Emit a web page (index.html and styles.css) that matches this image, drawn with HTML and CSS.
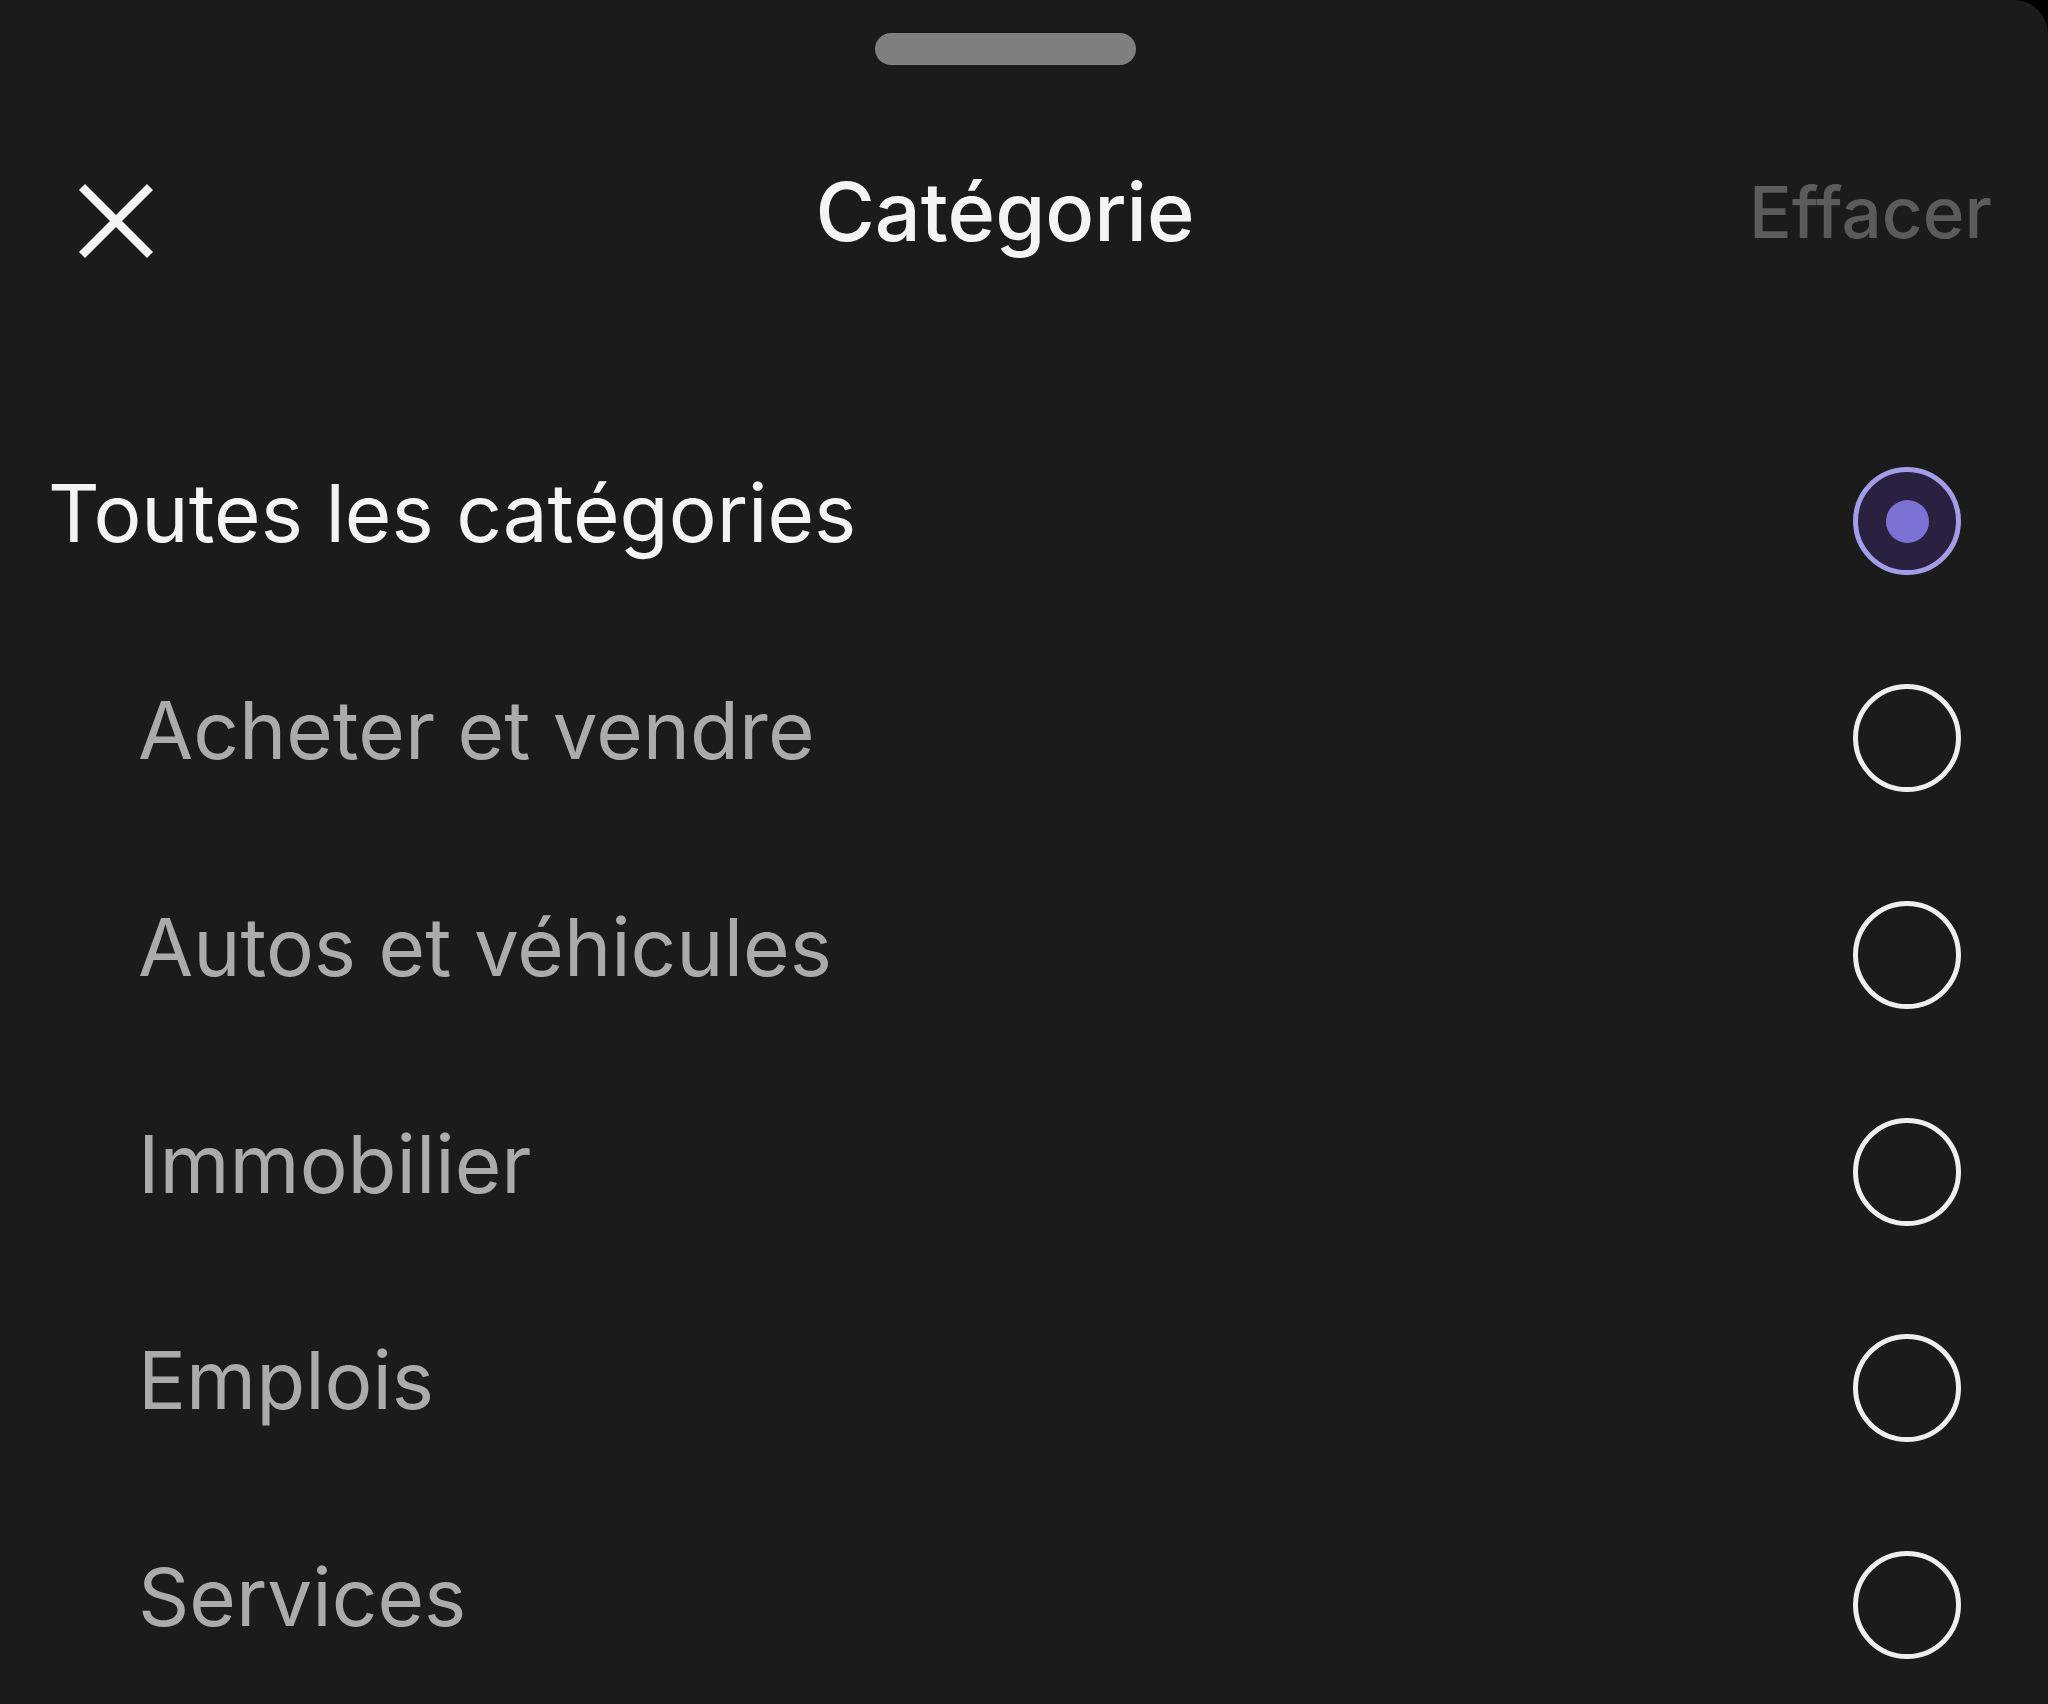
FILE: index.html
```html
<!DOCTYPE html>
<html lang="fr">
<head>
<meta charset="utf-8">
<title>Catégorie</title>
<link rel="stylesheet" href="styles.css">
</head>
<body>
<div class="sheet">
  <div class="handle"></div>
  <header class="header">
    <div class="close">
      <svg width="76" height="76" viewBox="0 0 76 76" aria-label="Fermer">
        <path d="M4 4 L72 72 M72 4 L4 72" stroke="#f4f4f4" stroke-width="8.5" fill="none" stroke-linecap="butt"/>
      </svg>
    </div>
    <div class="title">Catégorie</div>
    <div class="clear">Effacer</div>
  </header>
  <ul class="list">
    <li class="row row-all">
      <span class="label">Toutes les catégories</span>
      <span class="radio radio-on"><span class="dot"></span></span>
    </li>
    <li class="row row-sub">
      <span class="label">Acheter et vendre</span>
      <span class="radio"></span>
    </li>
    <li class="row row-sub">
      <span class="label">Autos et véhicules</span>
      <span class="radio"></span>
    </li>
    <li class="row row-sub">
      <span class="label">Immobilier</span>
      <span class="radio"></span>
    </li>
    <li class="row row-sub">
      <span class="label">Emplois</span>
      <span class="radio"></span>
    </li>
    <li class="row row-sub">
      <span class="label">Services</span>
      <span class="radio"></span>
    </li>
  </ul>
</div>
</body>
</html>
```

FILE: styles.css
```css
html, body {
  margin: 0;
  padding: 0;
  background: #000;
  overflow: hidden;
}
body {
  width: 2048px;
  height: 1704px;
  font-family: "Inter", "Noto Sans", sans-serif;
}
.sheet {
  width: 2048px;
  height: 1704px;
  background: #1b1b1b;
  border-top-right-radius: 34px;
  overflow: hidden;
  padding-top: 33px;
  box-sizing: border-box;
}
.handle {
  width: 261px;
  height: 32px;
  border-radius: 16px;
  background: #7f7f7f;
  margin-left: 875px;
}
.header {
  display: grid;
  grid-template-columns: 705px 600px 1fr;
  align-items: center;
  height: 120px;
  margin-top: 88px;
}
.close {
  padding-left: 78px;
  display: flex;
  align-items: center;
  height: 76px;
  margin-top: 16px;
}
.close svg { display: block; }
.title {
  text-align: center;
  font-size: 81px;
  font-weight: 500;
  color: #f4f4f4;
  line-height: 1.2;
}
.clear {
  text-align: right;
  padding-right: 56px;
  font-size: 71px;
  font-weight: 500;
  color: #5b5b5b;
  line-height: 1.2;
}
.list {
  list-style: none;
  margin: 139.9px 0 0 0;
  padding: 0 87px 0 48px;
}
.row {
  height: 216.8px;
  display: flex;
  align-items: center;
  justify-content: space-between;
}
.label {
  font-size: 80px;
  line-height: 1.2;
  padding-bottom: 16px;
}
.row-all .label {
  color: #f4f4f4;
}
.row-sub .label {
  color: #ababab;
  padding-left: 90px;
}
.radio {
  width: 98px;
  height: 98px;
  border: 5px solid #eeeeee;
  border-radius: 50%;
  display: flex;
  align-items: center;
  justify-content: center;
  flex: none;
}
.radio-on {
  border-color: #a39ce6;
  background: #2a2040;
}
.dot {
  width: 43px;
  height: 43px;
  border-radius: 50%;
  background: #7b72d4;
}
```
